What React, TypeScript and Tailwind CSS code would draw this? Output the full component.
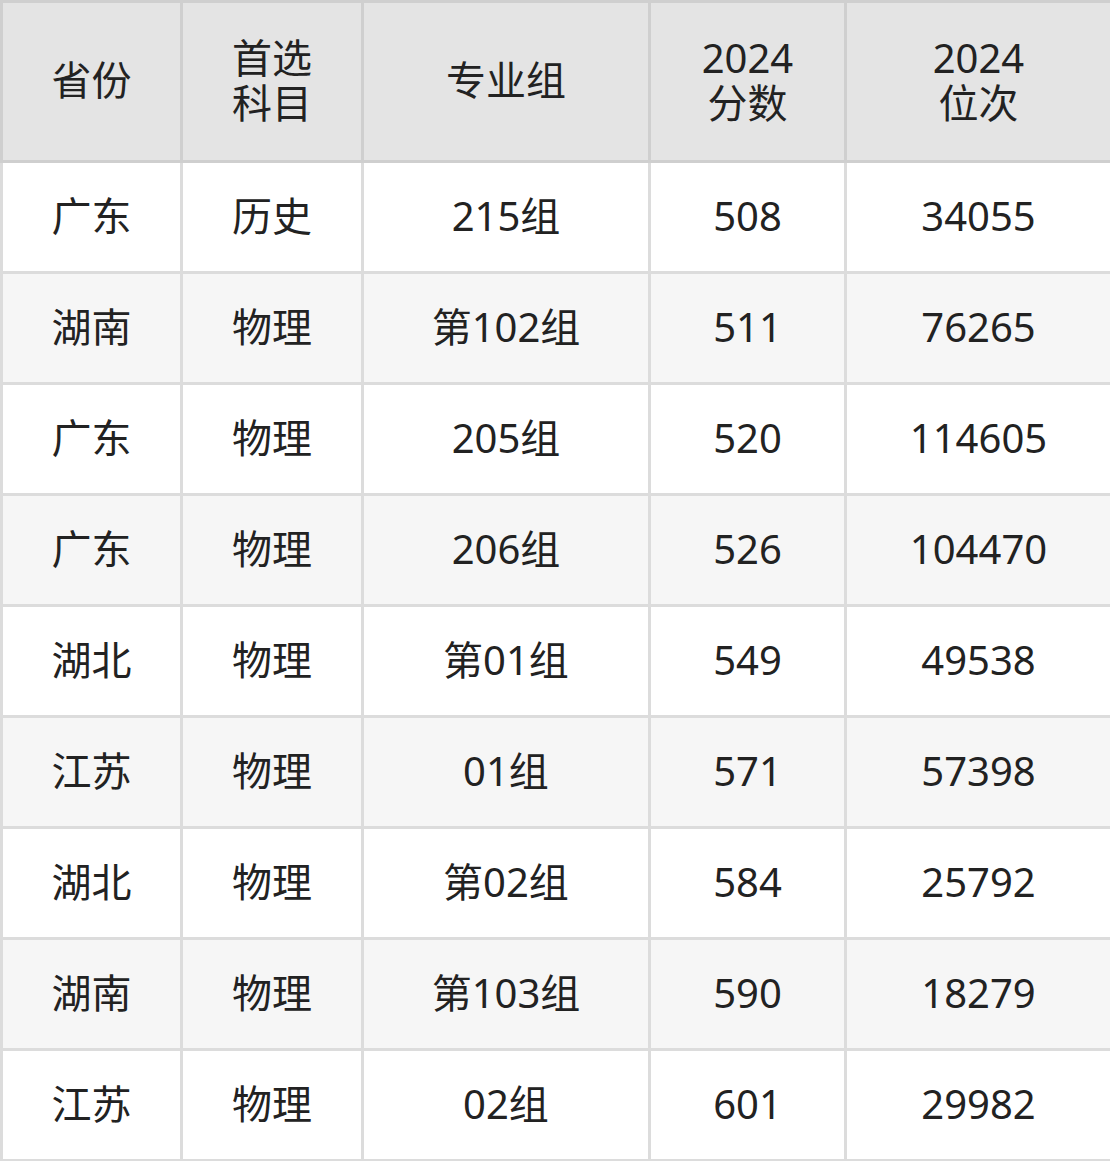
const header = ["省份", "首选\n科目", "专业组", "2024\n分数", "2024\n位次"];

const rows = [
  ["广东", "历史", "215组", "508", "34055"],
  ["湖南", "物理", "第102组", "511", "76265"],
  ["广东", "物理", "205组", "520", "114605"],
  ["广东", "物理", "206组", "526", "104470"],
  ["湖北", "物理", "第01组", "549", "49538"],
  ["江苏", "物理", "01组", "571", "57398"],
  ["湖北", "物理", "第02组", "584", "25792"],
  ["湖南", "物理", "第103组", "590", "18279"],
  ["江苏", "物理", "02组", "601", "29982"],
];

const widths = ["w-[180px]", "w-[181px]", "w-[287px]", "w-[196px]", "w-[266px]"];

export default function App() {
  return (
    <div className="w-[1110px] h-[1161px] bg-white font-['Noto_Sans','Noto_Sans_CJK_SC',sans-serif] text-[#222]">
      <table className="w-[1110px] border-collapse table-fixed text-[40px]">
        <thead>
          <tr className="h-[160px] bg-[#e4e4e4]">
            {header.map((h, i) => (
              <th
                key={i}
                className={`${widths[i]} border-[3px] border-[#cfcfcf] font-normal leading-[45px] whitespace-pre-line text-center pb-[4px]`}
              >
                {h}
              </th>
            ))}
          </tr>
        </thead>
        <tbody>
          {rows.map((r, ri) => (
            <tr key={ri} className={`h-[111px] ${ri % 2 === 1 ? "bg-[#f6f6f6]" : "bg-white"}`}>
              {r.map((c, ci) => (
                <td key={ci} className="border-[3px] border-[#dcdcdc] text-center leading-none pb-[2px]">
                  {c}
                </td>
              ))}
            </tr>
          ))}
        </tbody>
      </table>
    </div>
  );
}
